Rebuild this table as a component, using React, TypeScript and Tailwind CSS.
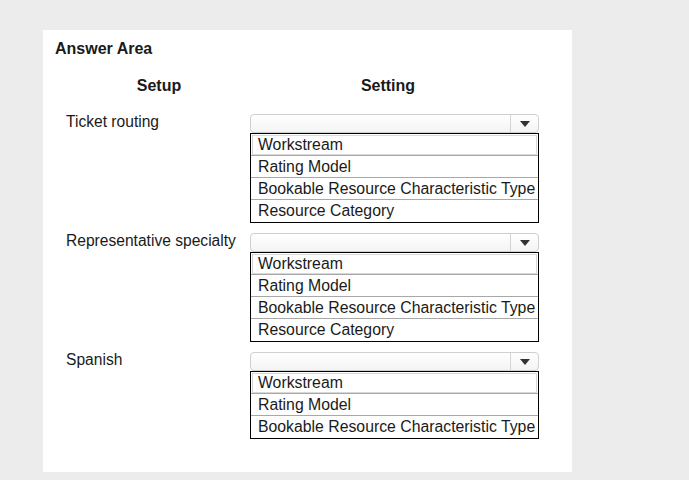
import React from "react";

const options = [
    ["Workstream", "Rating Model", "Bookable Resource Characteristic Type", "Resource Category"],
    ["Workstream", "Rating Model", "Bookable Resource Characteristic Type", "Resource Category"],
    ["Workstream", "Rating Model", "Bookable Resource Characteristic Type"],
];

const labels = ["Ticket routing", "Representative specialty", "Spanish"];

function Dropdown({ items }: { items: string[] }) {
    return (
        <div className="w-[289px]">
            <div className="flex h-[19px] rounded-[4px] border border-[#cfcfcf] bg-gradient-to-b from-white to-[#f4f4f4]">
                <div className="flex-1" />
                <div className="flex w-[28px] items-center justify-center border-l border-[#d4d4d4]">
                    <svg width="10" height="6" viewBox="0 0 10 6">
                        <polygon points="0,0 10,0 5,6" fill="#333" />
                    </svg>
                </div>
            </div>
            <div className="border border-black bg-white text-[15.8px]">
                {items.map((item, i) => (
                    <div
                        key={item}
                        className={
                            "h-[22px] whitespace-nowrap pl-[7px] leading-[21px] " +
                            (i < items.length - 1 ? "border-b border-[#a8a8a8] " : "") +
                            (i === 0 ? "outline outline-1 -outline-offset-2 outline-[#d8d8d8]" : "")
                        }
                    >
                        {item}
                    </div>
                ))}
            </div>
        </div>
    );
}

export default function App() {
    return (
        <main
            className="min-h-[480px] w-[689px] bg-[#ececec] pl-[43px] pt-[30px] text-[15.6px] text-[#1a1a1a]"
            style={{ fontFamily: '"Liberation Sans", Arial, sans-serif' }}
        >
            <div className="h-[442px] w-[529px] bg-white pl-[12px] pt-[10px]">
                <h1 className="text-[16px] font-bold leading-[18px]">Answer Area</h1>

                <div className="mt-[19px] flex text-[16px] font-bold leading-[18px]">
                    <div className="w-[208px] text-center">Setup</div>
                    <div className="w-[250px] text-center">Setting</div>
                </div>

                <div className="mt-[19px] flex flex-col gap-[10px]">
                    {labels.map((label, i) => (
                        <div key={label} className="flex">
                            <div className="-mt-[1px] ml-[11px] w-[184px] whitespace-nowrap leading-[18px]">
                                {label}
                            </div>
                            <Dropdown items={options[i]} />
                        </div>
                    ))}
                </div>
            </div>
        </main>
    );
}
